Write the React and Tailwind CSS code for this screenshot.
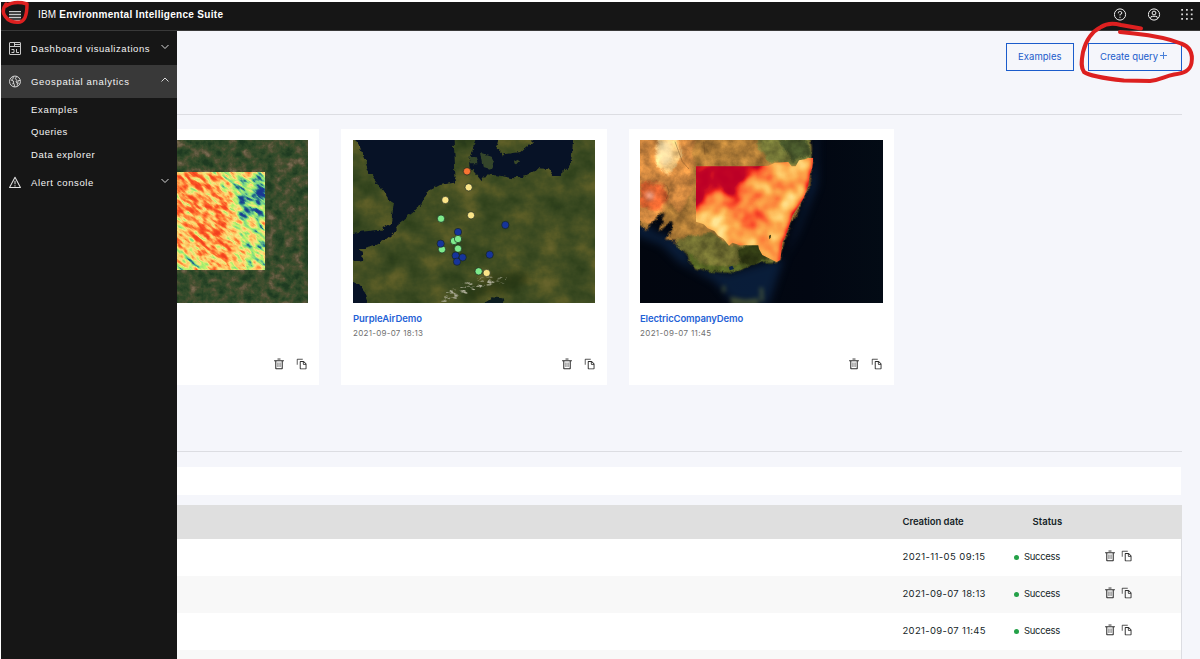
import React from "react";

const Trash = () => (
  <svg width="12" height="12" viewBox="0 0 32 32" fill="#2b2b2b" className="block shrink-0">
    <path d="M12 12h2.4v12H12zM17.6 12H20v12h-2.4z" opacity="0.75" />
    <path d="M3 6v2.8h3V28a2 2 0 0 0 2 2h16a2 2 0 0 0 2-2V8.800h3V6zM8.800 27.500V8.800h14.400v18.700z" />
    <path d="M12 1.500h8v2.500h-8z" />
  </svg>
);

const Copy = () => (
  <svg width="12" height="12" viewBox="0 0 32 32" fill="#2b2b2b" className="block shrink-0">
    <path d="M27.400 14.700l-6.100-6.100A2 2 0 0 0 20 8h-8a2 2 0 0 0-2 2v18a2 2 0 0 0 2 2h14a2 2 0 0 0 2-2V16a2 2 0 0 0-.6-1.300zM20.500 11l4.900 5h-4.900zM12.500 27.700V10.400h5.800V16a2 2 0 0 0 2 2h5.300v9.700z" />
    <path d="M4.500 18H2V4a2 2 0 0 1 2-2h14v2.500H4.500z" opacity="0.8" />
  </svg>
);

const Chevron = ({ up }) => (
  <svg width="8" height="6" viewBox="0 0 8 6" fill="none" stroke="#d8d8d8" strokeWidth="1" className="block shrink-0">
    <path d={up ? "M0.500 4.500 4 1l3.500 3.500" : "M0.500 1 4 4.500 7.500 1"} />
  </svg>
);

const Dashboard = () => (
  <svg width="12" height="13" viewBox="0 0 12 13" fill="none" stroke="#c8c8c8" strokeWidth="1" className="block shrink-0">
    <rect x="0.500" y="0.500" width="11" height="12" rx="0.500" />
    <path d="M0.500 4.500h11M5.500 0.500v4M5.500 2.500h6M2.500 7.500h2.500v3H2.500M7.500 7v3.500h2.500" />
  </svg>
);

const Globe = () => (
  <svg width="12" height="13" viewBox="0 0 13 13" fill="none" stroke="#e4e4e4" strokeWidth="1" className="block shrink-0">
    <circle cx="6.500" cy="6.500" r="5.900" />
    <path d="M4.500 1.300v2L2.500 5l2.300 1v2l-1 1.500M8 1.200 7 3.500l1.500 1.800L7.500 7l1.500 1v3M12 5.500H10l-.5 2 1.500 1.500M4.800 8l1 2v2" />
  </svg>
);

const Warning = () => (
  <svg width="12" height="13" viewBox="0 0 13 13" fill="none" stroke="#e4e4e4" strokeWidth="1.100" className="block shrink-0">
    <path d="M6.500 .8 12.400 12H.6z" strokeLinejoin="round" />
    <path d="M6.500 4.500v4M6.500 9.500v1.200" />
  </svg>
);

const FieldMap = () => (
  <svg width="131" height="163" viewBox="21 60 393 489" preserveAspectRatio="none" className="block">
    <defs>
      <filter id="fields" filterUnits="userSpaceOnUse" x="21" y="60" width="393" height="489" colorInterpolationFilters="sRGB">
        <feTurbulence type="fractalNoise" baseFrequency="0.035" numOctaves="5" seed="15" />
        <feColorMatrix values="1.400 .7 0 0 -0.600  1.400 .7 0 0 -0.600  1.400 .7 0 0 -0.600  0 0 0 0 1" />
        <feComponentTransfer>
          <feFuncR type="table" tableValues="0.12 0.16 0.21 0.28 0.38 0.48" />
          <feFuncG type="table" tableValues="0.23 0.27 0.30 0.31 0.35 0.42" />
          <feFuncB type="table" tableValues="0.13 0.15 0.17 0.19 0.25 0.32" />
        </feComponentTransfer>
      </filter>
      <filter id="heat" filterUnits="userSpaceOnUse" x="-100" y="-250" width="900" height="900" colorInterpolationFilters="sRGB">
        <feTurbulence type="fractalNoise" baseFrequency="0.030 0.080" numOctaves="3" seed="4" result="n" />
        <feColorMatrix in="n" values="1 0 0 0 0  1 0 0 0 0  1 0 0 0 0  0 0 0 0 1" result="g" />
        <feComposite in="SourceGraphic" in2="g" operator="arithmetic" k1="0" k2="1" k3="1.200" k4="-0.600" />
        <feComponentTransfer>
          <feFuncR type="table" tableValues="0.10 0.15 0.45 0.70 0.98 1 1 0.98 0.95" />
          <feFuncG type="table" tableValues="0.22 0.45 0.82 0.95 0.90 0.76 0.50 0.32 0.25" />
          <feFuncB type="table" tableValues="0.58 0.55 0.55 0.42 0.50 0.38 0.22 0.14 0.12" />
        </feComponentTransfer>
      </filter>
      <filter id="soft" x="-50%" y="-50%" width="200%" height="200%" colorInterpolationFilters="sRGB">
        <feGaussianBlur stdDeviation="16" />
      </filter>
      <clipPath id="heatClip"><rect x="0" y="156" width="285" height="294" /></clipPath>
    </defs>
    <rect x="21" y="60" width="393" height="489" filter="url(#fields)" />
    <g clipPath="url(#heatClip)">
      <g transform="rotate(38)">
        <g filter="url(#heat)">
          <g transform="rotate(-38)">
            <rect x="-300" y="-200" width="1100" height="1100" fill="#909090" />
            <g filter="url(#soft)">
              <path d="M0 130 100 150 170 230 190 330 170 440 110 430 60 340 0 310z" fill="#b4b4b4" />
              <path d="M150 130H320V480H240L190 300z" fill="#6c6c6c" />
              <path d="M215 190 300 175 295 270 240 310 220 260z" fill="#2c2c2c" />
              <path d="M0 400 90 390 100 470 0 470z" fill="#727272" />
            </g>
          </g>
        </g>
      </g>
    </g>
  </svg>
);

const sensors = [
  [381, 139, "#f97432"], [386, 187, "#fbe588"], [316, 225, "#fbe588"], [393, 271, "#fbe588"],
  [303, 281, "#7eea8c"], [496, 300, "#16349a"], [354, 321, "#16349a"], [342, 348, "#7eea8c"],
  [354, 342, "#7eea8c"], [306, 373, "#7eea8c"], [302, 356, "#16349a"], [354, 371, "#7eea8c"],
  [347, 392, "#16349a"], [351, 410, "#16349a"], [368, 397, "#16349a"], [449, 389, "#16349a"],
  [416, 439, "#7eea8c"], [440, 444, "#fbe588"],
];

const EuropeMap = () => (
  <svg width="242" height="163" viewBox="39 45 726 489" preserveAspectRatio="none" className="block">
    <defs>
      <filter id="land" filterUnits="userSpaceOnUse" x="39" y="45" width="726" height="489" colorInterpolationFilters="sRGB">
        <feTurbulence type="fractalNoise" baseFrequency="0.012 0.014" numOctaves="5" seed="12" />
        <feColorMatrix values="1.300 0 0 0 -0.120  1.300 0 0 0 -0.120  1.300 0 0 0 -0.120  0 0 0 0 1" />
        <feComponentTransfer>
          <feFuncR type="table" tableValues="0.15 0.19 0.23 0.28 0.35 0.40" />
          <feFuncG type="table" tableValues="0.22 0.26 0.29 0.32 0.36 0.39" />
          <feFuncB type="table" tableValues="0.10 0.11 0.13 0.14 0.15 0.17" />
        </feComponentTransfer>
      </filter>
      <filter id="coast" filterUnits="userSpaceOnUse" x="0" y="0" width="800" height="600" colorInterpolationFilters="sRGB">
        <feTurbulence type="fractalNoise" baseFrequency="0.050" numOctaves="3" seed="2" result="n" />
        <feDisplacementMap in="SourceGraphic" in2="n" scale="18" xChannelSelector="R" yChannelSelector="G" />
        <feGaussianBlur stdDeviation="1.500" />
      </filter>
      <filter id="shade" filterUnits="userSpaceOnUse" x="0" y="0" width="800" height="600" colorInterpolationFilters="sRGB">
        <feGaussianBlur stdDeviation="10" />
      </filter>
      <filter id="snow" filterUnits="userSpaceOnUse" x="280" y="430" width="260" height="110" colorInterpolationFilters="sRGB">
        <feTurbulence type="fractalNoise" baseFrequency="0.050 0.090" numOctaves="3" seed="6" />
        <feColorMatrix values="0 0 0 0 0.680  0 0 0 0 0.680  0 0 0 0 0.600  5 0 0 0 -2.600" />
        <feComposite in2="SourceGraphic" operator="in" />
      </filter>
    </defs>
    <rect x="39" y="45" width="726" height="489" filter="url(#land)" />
    <g filter="url(#coast)">
      <path d="M40 30H340L344 100 346 150 348 172 300 180 262 200 248 232 220 262 180 292 160 325 135 345 108 362 70 372 50 372 72 382 66 405 30 410V325L85 318 122 314 152 296 158 262 162 232 140 218 122 190 108 168 82 132 76 105 60 70z" fill="#071226" />
      <path d="M412 30H480L470 70 490 88 545 80 578 50 575 30H700L696 90 690 125 662 150 640 150 628 132 598 130 560 150 520 160 480 152 440 148 425 168 410 150 392 128 388 100 400 75z" fill="#071226" />
      <path d="M420 82 452 92 462 112 450 135 428 128zM388 92 408 94 412 118 392 118z" fill="#34452a" />
      <path d="M522 103 540 112 532 121 523 115z" fill="#3c4a28" />
      <path d="M30 465 58 478 75 500 82 540H30z" fill="#071226" />
      <path d="M432 532 455 517 488 520 492 545H430z" fill="#0c1c20" />
    </g>
    <path d="M450 450 550 440 570 465 520 500 440 505 400 530 370 510z" fill="#152508" opacity="0.450" filter="url(#shade)" />
    <path d="M300 530 320 500 370 475 430 455 500 455 495 475 430 485 385 505 340 530z" filter="url(#snow)" />
    {sensors.map(([x, y, c]) => (
      <circle key={`${x}-${y}`} cx={x} cy={y} r="11" fill={c} stroke="#18251c" strokeWidth="2" />
    ))}
  </svg>
);

const AustraliaMap = () => (
  <svg width="243" height="163" viewBox="45 45 729 489" preserveAspectRatio="none" className="block">
    <defs>
      <filter id="desert" filterUnits="userSpaceOnUse" x="0" y="0" width="800" height="600" colorInterpolationFilters="sRGB">
        <feTurbulence type="fractalNoise" baseFrequency="0.026" numOctaves="5" seed="21" result="n" />
        <feColorMatrix in="n" values="1 0 0 0 0  1 0 0 0 0  1 0 0 0 0  0 0 0 0 1" result="g" />
        <feGaussianBlur in="SourceGraphic" stdDeviation="3" result="s" />
        <feDisplacementMap in="s" in2="n" scale="26" xChannelSelector="R" yChannelSelector="G" result="d" />
        <feComposite in="d" in2="g" operator="arithmetic" k1="0.800" k2="0.600" k3="0" k4="0" result="m" />
        <feComposite in="m" in2="d" operator="in" />
      </filter>
      <filter id="fire" filterUnits="userSpaceOnUse" x="200" y="90" width="380" height="330" colorInterpolationFilters="sRGB">
        <feTurbulence type="fractalNoise" baseFrequency="0.020" numOctaves="2" seed="7" />
        <feColorMatrix values="1 0 0 0 0  1 0 0 0 0  1 0 0 0 0  0 0 0 0 1" result="g" />
        <feComposite in="SourceGraphic" in2="g" operator="arithmetic" k1="0" k2="1" k3="0.800" k4="-0.400" />
        <feComponentTransfer>
          <feFuncR type="table" tableValues="0.74 0.76 0.92 0.99 0.99 0.99 1 1" />
          <feFuncG type="table" tableValues="0 0.02 0.14 0.34 0.53 0.67 0.80 0.90" />
          <feFuncB type="table" tableValues="0.15 0.15 0.12 0.18 0.24 0.30 0.42 0.58" />
        </feComponentTransfer>
      </filter>
      <filter id="blur10" x="-50%" y="-50%" width="200%" height="200%" colorInterpolationFilters="sRGB"><feGaussianBlur stdDeviation="12" /></filter>
      <filter id="blur5" x="-50%" y="-50%" width="200%" height="200%" colorInterpolationFilters="sRGB"><feGaussianBlur stdDeviation="6" /></filter>
      <linearGradient id="sea" x1="0" y1="0" x2="1" y2="0">
        <stop offset="0" stopColor="#02060f" /><stop offset="0.700" stopColor="#020712" /><stop offset="1" stopColor="#030b15" />
      </linearGradient>
      <clipPath id="region">
        <path d="M213 124H390L430 122 450 113 490 111 500 124 512 124 522 106 540 103 550 98 565 99 562 128 554 150 550 180 536 220 520 244 502 272 492 304 482 332 472 352 466 405 455 411 436 402 412 390 402 372 400 361 345 361 322 353 312 362 296 342 280 332 268 318 248 310 236 298 213 290z" />
      </clipPath>
    </defs>
    <rect x="45" y="45" width="729" height="489" fill="url(#sea)" />
    <path d="M30 270 90 320 180 350 200 420 310 445 430 410 480 400 530 260 566 110 570 30 578 30 576 180 520 320 470 420 430 540 320 530 270 470 160 410 110 360 30 330z" fill="#0b2140" filter="url(#blur10)" opacity="0.850" />
    <g filter="url(#desert)">
      <path d="M30 30H556L562 70 560 110 545 210 500 290 475 370 462 408 420 412 370 422 340 446 310 442 290 432 240 440 210 428 190 408 178 375 152 350 120 348 140 315 135 290 118 310 95 322 120 260 90 290 62 318 30 275z" fill="#ad7a36" />
      <path d="M30 30H205V190L160 260 130 240 80 300 30 280z" fill="#d08840" />
      <path d="M90 30H160L170 100 130 150 100 120z" fill="#f0c47c" />
      <path d="M45 170 110 175 125 215 110 255 60 250 45 240z" fill="#d8602e" />
      <path d="M380 30H556L562 110 520 125 430 110z" fill="#777a38" />
      <path d="M460 40H545L556 90 500 115z" fill="#46552a" />
      <path d="M150 345 250 320 320 360 400 355 462 408 420 412 370 422 340 446 240 440 200 420z" fill="#6e6c30" />
      <path d="M180 375 240 420 310 425 400 400 462 408 420 412 370 422 340 446 240 440 200 420z" fill="#566524" />
      <path d="M335 370 400 355 430 395 390 420 340 415z" fill="#323c14" />
    </g>
    <path d="M102 50H138L142 105 118 125 96 100z" fill="#fff0c0" filter="url(#blur5)" opacity="0.600" />
    <path d="M58 205 80 200 90 218 70 224z" fill="#ffd8d0" opacity="0.600" filter="url(#blur5)" />
    <path d="M125 180 132 200 124 222M150 50 172 110 192 132M236 50 240 90" fill="none" stroke="#6a4520" strokeWidth="2.500" strokeOpacity="0.500" />
    <g clipPath="url(#region)">
      <g filter="url(#fire)">
        <rect x="150" y="50" width="500" height="450" fill="#a8a8a8" />
        <g filter="url(#blur10)">
          <path d="M190 100H420L395 150 350 180 330 215 250 200 225 250 195 250z" fill="#101010" />
          <path d="M340 190 420 200 440 300 360 330 300 280z" fill="#909090" />
          <path d="M205 265 300 260 350 350 290 370z" fill="#d8d8d8" />
          <path d="M450 110 550 130 520 230 480 320 450 390 420 370 470 250z" fill="#c4c4c4" />
        </g>
        <path d="M568 90 556 160 540 222 506 272 488 330 474 358 466 415" stroke="#202020" strokeWidth="13" fill="none" filter="url(#blur5)" />
      </g>
      <path d="M432 332 438 329 437 338 433 343z" fill="#3b3710" />
    </g>
    <g filter="url(#blur5)" fill="#65713a" opacity="0.600">
      <path d="M292 482H301V502H292zM404 486 414 490 416 530 406 528zM315 515 360 524 400 520 400 540H320z" />
    </g>
    <path d="M312 426 322 422 327 432 314 436z" fill="#0c2447" />
  </svg>
);

const Card = ({ className, children, title, date, titleClass, dateClass }) => (
  <div className={`flex h-[256px] shrink-0 flex-col bg-white pt-[11px] ${className}`}>
    {children}
    <div className="mt-[8px] h-[14px] whitespace-nowrap text-[9.500px] font-semibold leading-[15px] text-[#1f62d6]">
      <span className={titleClass}>{title}</span>
    </div>
    <div className="mt-[2px] h-[12px] whitespace-nowrap text-[8px] leading-[12px] text-[#6f6f6f]">
      <span className={dateClass}>{date}</span>
    </div>
    <div className="mt-[19px] flex justify-end gap-[11px]">
      <Trash />
      <Copy />
    </div>
  </div>
);

const Row = ({ date, shade, dateClass }) => (
  <div className={`flex h-[37px] shrink-0 items-center border-r border-[#dcdde2] pb-[3px] pl-[725px] text-[10px] text-[#161f28] ${shade ? "bg-[#f8f8f8]" : "bg-white"}`}>
    <span className={`w-[112px] whitespace-nowrap pl-[0.500px] pt-[3px] text-[9.500px] ${dateClass}`}>{date}</span>
    <span className="mt-[3px] size-[5px] rounded-full bg-[#24a148]" />
    <span className="ml-[5px] w-[80px] pt-[3px] text-[9.500px] tracking-[-0.300px]">Success</span>
    <div className="flex gap-[5px]">
      <Trash />
      <Copy />
    </div>
  </div>
);

export default function App() {
  return (
    <div className="relative flex h-[659px] w-[1200px] flex-col overflow-hidden bg-white pl-px pt-[2px] font-['Inter','Liberation_Sans',sans-serif]">
      <header className="flex h-[29px] shrink-0 items-center border-b border-[#393939] bg-[#161616] pl-2 font-['Liberation_Sans',sans-serif] text-[10px] text-white">
        <svg width="12" height="10" viewBox="0 0 12 10" className="mb-px block">
          <path d="M0 0.500h12M0 3.500h12M0 6.500h12M0 9.500h12" stroke="#c8c8c8" strokeWidth="1.300" />
        </svg>
        <span className="ml-[17px] whitespace-nowrap pb-[3px] text-[10px] tracking-[0.150px]">
          IBM <b className="tracking-[0.300px]">Environmental Intelligence Suite</b>
        </span>
        <div className="ml-auto flex items-center pb-[4px] pr-[7px]">
          <svg width="13" height="13" viewBox="0 0 13 13" fill="none" stroke="#f0f0f0" className="block">
            <circle cx="6" cy="6.500" r="5.600" />
            <path d="M4.300 5.300V4.800a1.300 1.300 0 0 1 1.300-1.300h.8a1.300 1.300 0 0 1 0 2.800H6v1.200M6 8.700v1.200" />
          </svg>
          <svg width="13" height="13" viewBox="0 0 13 13" fill="none" stroke="#f0f0f0" className="ml-[21px] block">
            <circle cx="6" cy="6.500" r="5.600" />
            <circle cx="6" cy="5" r="1.900" />
            <path d="M2.700 10.500V9.800a1.500 1.500 0 0 1 1.500-1.500h3.600a1.500 1.500 0 0 1 1.500 1.500v.7" />
          </svg>
          <svg width="12" height="12" viewBox="0 0 12 12" fill="#d8d8d8" className="ml-[20px] block">
            <path d="M.2 1H2v1.800H.2zM5 1h1.800v1.800H5zM9.800 1h1.800v1.800H9.800zM.2 5.500H2v1.800H.2zM5 5.500h1.800v1.800H5zM9.800 5.500h1.800v1.800H9.800zM.2 10H2v1.800H.2zM5 10h1.800v1.800H5zM9.800 10h1.800v1.800H9.800z" />
          </svg>
        </div>
      </header>

      <div className="flex min-h-0 flex-1">
        <nav className="flex w-[176px] shrink-0 flex-col bg-[#161616] font-['Liberation_Sans',sans-serif] text-[9.500px] text-[#f4f4f4]">
          <div className="flex h-[34px] items-center pl-2 pr-2">
            <Dashboard />
            <span className="ml-[10px] whitespace-nowrap pt-[2px] tracking-[0.560px]">Dashboard visualizations</span>
            <div className="ml-auto pb-[3px]"><Chevron /></div>
          </div>
          <div className="flex h-[33px] items-center bg-[#393939] pl-2 pr-2">
            <Globe />
            <span className="ml-[10px] whitespace-nowrap pt-px tracking-[0.680px]">Geospatial analytics</span>
            <div className="ml-auto pb-[3px]"><Chevron up /></div>
          </div>
          <div className="flex h-[68px] flex-col pl-[30px] tracking-[0.700px]">
            <span className="h-[23px] leading-[23px]">Examples</span>
            <span className="h-[22px] leading-[21px] tracking-[0.500px]">Queries</span>
            <span className="h-[23px] leading-[24px] tracking-[0.550px]">Data explorer</span>
          </div>
          <div className="flex h-[33px] items-center pl-2 pr-2">
            <Warning />
            <span className="ml-[10px] whitespace-nowrap pt-px tracking-[0.620px]">Alert console</span>
            <div className="ml-auto pb-[3px]"><Chevron /></div>
          </div>
        </nav>

        <main className="flex w-[1023px] flex-col overflow-hidden bg-[#f5f6fb]">
          <div className="flex w-[1005px] flex-col">
            <div className="flex h-[84px] shrink-0 items-start justify-end gap-[14px] border-b border-[#dcdde2] pt-[12px] text-[9.500px] text-[#1b5ccb]">
              <button className="flex h-[28px] w-[68px] items-center border border-[#1b5ccb] pl-[11px] text-[#1b5ccb]">
                <span className="tracking-[0.050px]">Examples</span>
              </button>
              <button className="flex h-[28px] w-[94px] items-center border border-[#1b5ccb] pl-[11px] text-[#1b5ccb]">
                <span className="whitespace-nowrap tracking-[-0.050px]">Create query</span>
                <svg width="7" height="7" viewBox="0 0 7 7" stroke="#4a80d8" className="mb-[4px] ml-[2px] block">
                  <path d="M3.500 0v7M0 3.500h7" />
                </svg>
              </button>
            </div>
            <div className="flex gap-[22px] pt-[14px]">
              <Card className="w-[142px] pr-[11px]">
                <FieldMap />
              </Card>
              <Card className="w-[266px] pl-[12px] pr-[11px]" title="PurpleAirDemo" date="2021-09-07 18:13" titleClass="tracking-[-0.05px]" dateClass="tracking-[0.280px]">
                <EuropeMap />
              </Card>
              <Card className="w-[265px] px-[11px]" title="ElectricCompanyDemo" date="2021-09-07 11:45" titleClass="tracking-[-0.130px]" dateClass="tracking-[0.350px]">
                <AustraliaMap />
              </Card>
            </div>
            <div className="h-[67px] shrink-0 border-b border-[#dcdde2]" />
            <div className="mr-px mt-[15px] h-[28px] shrink-0 bg-white" />
            <div className="mt-[10px] flex h-[34px] shrink-0 items-center bg-[#dfdfdf] pl-[725.500px] text-[9.500px] font-semibold text-[#161f28]">
              <span className="w-[130px] tracking-[-0.05px]">Creation date</span>
              <span className="tracking-[0.05px]">Status</span>
            </div>
            <Row date="2021-11-05 09:15" dateClass="tracking-[0.400px]" />
            <Row date="2021-09-07 18:13" dateClass="tracking-[0.320px]" shade />
            <Row date="2021-09-07 11:45" dateClass="tracking-[0.320px]" />
            <div className="h-[37px] shrink-0 border-r border-[#dcdde2] bg-[#f8f8f8]" />
          </div>
        </main>
      </div>

      <svg width="1200" height="659" viewBox="0 0 1200 659" fill="none" stroke="#dd2020" strokeWidth="4" strokeLinecap="round" strokeLinejoin="round" className="pointer-events-none absolute left-0 top-0">
        <path d="M6 4C3 8 2 12 5 16 8 21 14 23 20 22 25 21 27 14 27 4 20 2 12 2 6 6" strokeWidth="3.500" />
        <path d="M1141 28.500 1121 25C1113 23 1107 23 1101 27 1091 32 1086 40 1083 52 1081 63 1081 68 1084 72 1091 77 1110 79 1124 80.500L1150 81C1160 80 1165 76 1174 74.500 1184 73 1190 71 1191.500 63 1193 54 1191 47 1181 43.500 1165 37 1148 35 1134 33.500L1120 32" />
      </svg>
    </div>
  );
}
